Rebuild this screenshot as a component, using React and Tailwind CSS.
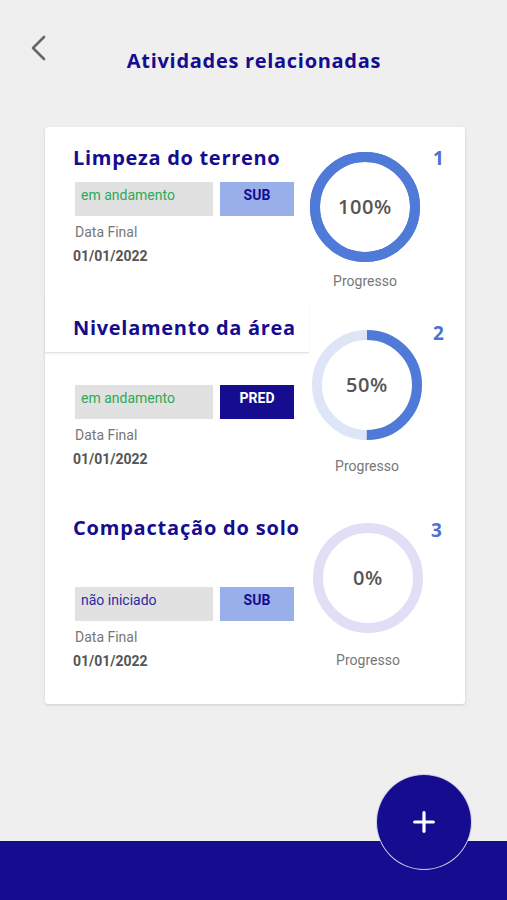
import { Plus } from "lucide-react";

const Ring = ({ pct, track, color, label }) => {
  const r = 50;
  const c = 2 * Math.PI * r;
  return (
    <div className="relative w-[110px] h-[110px] bg-white rounded-full">
      <svg width="110" height="110" viewBox="0 0 110 110">
        <circle cx="55" cy="55" r={r} fill="none" stroke={track} strokeWidth="10" />
        {pct > 0 && (
          <circle
            cx="55"
            cy="55"
            r={r}
            fill="none"
            stroke={color}
            strokeWidth="10"
            strokeDasharray={`${(c * pct) / 100} ${c}`}
            transform="rotate(-90 55 55)"
          />
        )}
      </svg>
      <div className="absolute inset-0 flex items-center justify-center text-[20px] font-semibold tracking-[0.6px] text-[#555] font-['Open_Sans',sans-serif]">
        {label}
      </div>
    </div>
  );
};

const Badges = ({ status, statusColor, tag, dark, mt }) => (
  <div className={`flex pl-[30px] gap-[7px] ${mt}`}>
    <div className={`w-[138px] h-[34px] bg-[#e1e1e1] px-[6px] pt-[3px] text-[14px] leading-[20px] ${statusColor}`}>
      {status}
    </div>
    <div
      className={`w-[74px] h-[34px] pt-[3px] text-center text-[14px] leading-[20px] font-bold ${
        dark ? "bg-[#150c8f] text-white" : "bg-[#98afe9] text-[#150c8f]"
      }`}
    >
      {tag}
    </div>
  </div>
);

const DateBlock = () => (
  <>
    <div className="pl-[30px] mt-[6px] text-[14px] leading-[20px] text-[#777]">Data Final</div>
    <div className="pl-[28px] mt-[4px] text-[14px] leading-[20px] font-bold text-[#555]">01/01/2022</div>
  </>
);

const App = () => {
  return (
    <div className="w-[507px] h-[900px] bg-[#efefef] flex flex-col font-['Roboto',sans-serif] overflow-hidden">
      {/* header */}
      <div className="relative h-[127px]">
        <svg className="absolute left-[28px] top-[34px]" width="20" height="28" viewBox="0 0 20 28">
          <path d="M16 3 L5 14 L16 25" fill="none" stroke="#666" strokeWidth="2.6" strokeLinecap="round" strokeLinejoin="round" />
        </svg>
        <div className="pt-[47px] text-center text-[20px] leading-[28px] font-bold tracking-[0.7px] text-[#150c8f] font-['Open_Sans',sans-serif] pl-[1px]">
          Atividades relacionadas
        </div>
      </div>

      {/* card */}
      <div className="ml-[45px] w-[420px] bg-white rounded-[3px] shadow-[0_1px_3px_rgba(0,0,0,0.15)] flex flex-col">
        {/* row 1 */}
        <div className="h-[173px] flex">
          <div className="w-[264px] flex flex-col pt-[16px]">
            <div className="pl-[28px] h-[30px] leading-[30px] text-[20px] font-bold tracking-[0.7px] text-[#150c8f] font-['Open_Sans',sans-serif] whitespace-nowrap">
              Limpeza do terreno
            </div>
            <Badges status="em andamento" statusColor="text-[#2ea955]" tag="SUB" mt="mt-[9px]" />
            <DateBlock />
          </div>
          <div className="flex">
            <div className="flex flex-col items-center w-[112px] pt-[25px]">
              <Ring pct={100} track="#4f7ad8" color="#4f7ad8" label="100%" />
              <div className="mt-[9px] text-[14px] leading-[20px] text-[#777]">Progresso</div>
            </div>
            <div className="pl-[12px] pt-[19px] text-[19px] leading-[24px] font-bold text-[#4a72d5] font-['Open_Sans',sans-serif]">1</div>
          </div>
        </div>

        {/* row 2 */}
        <div className="h-[200px] flex">
          <div className="w-[264px] flex flex-col">
            <div className="pl-[28px] pt-[13px] pb-[9px] border-b border-[#e4e4e4] shadow-[0_1px_2px_rgba(0,0,0,0.06)]">
              <div className="h-[30px] leading-[30px] text-[20px] font-bold tracking-[0.7px] text-[#150c8f] font-['Open_Sans',sans-serif] whitespace-nowrap">
                Nivelamento da área
              </div>
            </div>
            <Badges status="em andamento" statusColor="text-[#2ea955]" tag="PRED" dark mt="mt-[32px]" />
            <DateBlock />
          </div>
          <div className="flex">
            <div className="flex flex-col items-center w-[112px] pt-[30px] pl-[4px]">
              <Ring pct={50} track="#dde5f7" color="#4f7ad8" label="50%" />
              <div className="mt-[16px] text-[14px] leading-[20px] text-[#777]">Progresso</div>
            </div>
            <div className="pl-[12px] pt-[21px] text-[19px] leading-[24px] font-bold text-[#4a72d5] font-['Open_Sans',sans-serif]">2</div>
          </div>
        </div>

        {/* row 3 */}
        <div className="h-[204px] flex">
          <div className="w-[264px] flex flex-col">
            <div className="pl-[28px] mt-[13px] h-[30px] leading-[30px] text-[20px] font-bold tracking-[0.8px] text-[#150c8f] font-['Open_Sans',sans-serif] whitespace-nowrap">
              Compactação do solo
            </div>
            <Badges status="não iniciado" statusColor="text-[#2b2ba3]" tag="SUB" mt="mt-[44px]" />
            <DateBlock />
          </div>
          <div className="flex">
            <div className="flex flex-col items-center w-[112px] pt-[23px] pl-[6px]">
              <Ring pct={0} track="#e1dff6" color="#e1dff6" label="0%" />
              <div className="mt-[17px] text-[14px] leading-[20px] text-[#777]">Progresso</div>
            </div>
            <div className="pl-[10px] pt-[18px] text-[19px] leading-[24px] font-bold text-[#4a72d5] font-['Open_Sans',sans-serif]">3</div>
          </div>
        </div>
      </div>

      {/* bottom bar */}
      <div className="mt-auto relative h-[59px] bg-[#150c8f]">
        <div className="absolute left-[376px] top-[-67px] w-[96px] h-[96px] rounded-full bg-[#150c8f] border border-white/80 flex items-center justify-center">
          <Plus size={32} strokeWidth={2.4} color="white" />
        </div>
      </div>
    </div>
  );
};

export default App;
